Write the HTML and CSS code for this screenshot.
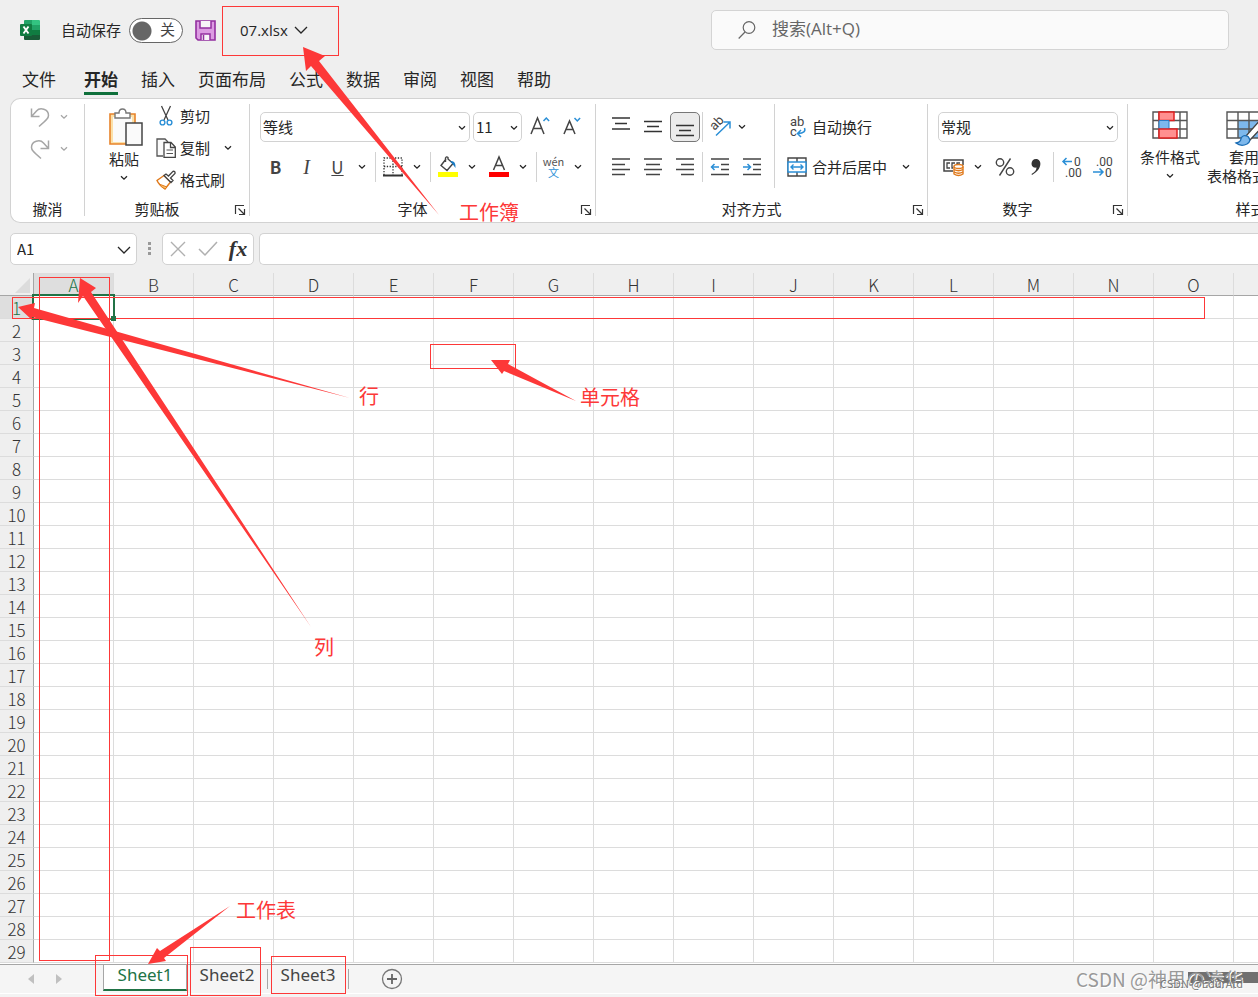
FILE: index.html
```html
<!DOCTYPE html>
<html lang="zh-CN">
<head>
<meta charset="utf-8">
<meta name="viewport" content="width=device-width, initial-scale=1">
<title>07.xlsx</title>
<link rel="stylesheet" href="styles.css">
</head>
<body>
<svg class="defs" aria-hidden="true">
  <symbol id="chev" viewBox="0 0 8 6"><path d="M1 1.2 4 4.2 7 1.2" fill="none" stroke="currentColor" stroke-width="1.3"/></symbol>
  <symbol id="chev-lg" viewBox="0 0 14 8"><path d="M1 1 7 7 13 1" fill="none" stroke="currentColor" stroke-width="1.3"/></symbol>
  <symbol id="launch" viewBox="0 0 12 12"><path d="M1.5 10V1.5H10M4.500 4.500 10 10M10.500 5V10.500H5" fill="none" stroke="#333" stroke-width="1.2"/></symbol>
</svg>
<div class="app">
  <header class="titlebar">
    <svg class="logo" viewBox="0 0 20 20"><path d="M4 1q0-1 1-1H12V10H4z" fill="#21a366"/><path d="M12 0H19q1 0 1 1V5H12z" fill="#33c481"/><path d="M12 5H20V10H12z" fill="#21a366"/><path d="M4 10H12V15H4z" fill="#185c37"/><path d="M12 10H20V15H12z" fill="#107c41"/><path d="M4 15H20V19q0 1-1 1H5q-1 0-1-1z" fill="#185c37"/><rect y="4" width="12" height="12" rx="1" fill="#107c41"/><path d="m3.500 6.500 5 7M8.500 6.500l-5 7" stroke="#fff" stroke-width="1.900"/></svg>
    <label class="autosave" for="autosave">自动保存</label>
    <span class="switch"><input type="checkbox" id="autosave" role="switch"><span class="switch-text">关</span></span>
    <button class="plain save" aria-label="保存"><svg width="21" height="21" viewBox="0 0 21 21"><path d="M1 1H20V20H3L1 18z" fill="#dc9be2" stroke="#932fa0" stroke-width="1.600"/><path d="M5 1V8H16V1M6 20V14H15V20" fill="#f8f4f8" stroke="#932fa0" stroke-width="1.500"/><path d="M8.500 15V20" stroke="#932fa0" stroke-width="1.500"/></svg></button>
    <button class="plain filename">07.xlsx <svg width="14" height="8"><use href="#chev-lg"/></svg></button>
    <div class="search">
      <svg width="18" height="18" viewBox="0 0 18 18"><circle cx="11" cy="6.500" r="5.800" fill="none" stroke="#666" stroke-width="1.200"/><path d="M7 11 .7 17.500" stroke="#666" stroke-width="1.200"/></svg>
      <input type="search" aria-label="搜索" placeholder="搜索(Alt+Q)">
    </div>
  </header>

  <nav class="menu">
    <button>文件</button><button class="active">开始</button><button>插入</button><button>页面布局</button><button>公式</button><button>数据</button><button>审阅</button><button>视图</button><button>帮助</button>
  </nav>

  <section class="ribbon">
    <div class="group undo">
      <div class="body stack">
        <button class="tool faded" aria-label="撤消"><svg width="20" height="20" viewBox="0 0 20 20"><path d="M1.500 1.500V9.500H9.500M1.500 9.500 6.500 4C10 0 18.500 2 18.500 8.500 18.500 11 17 12.500 9 19.500" fill="none" stroke="#a6a6a6" stroke-width="1.500"/></svg><svg class="ch"><use href="#chev"/></svg></button>
        <button class="tool faded" aria-label="重做"><svg width="20" height="20" viewBox="0 0 20 20"><path d="M18.500 1.500V9.500H10.500M18.500 9.500 13.500 4C10 0 1.500 2 1.500 8.500 1.500 11 3 12.500 11 19.500" fill="none" stroke="#a6a6a6" stroke-width="1.500"/></svg><svg class="ch"><use href="#chev"/></svg></button>
      </div>
      <div class="caption">撤消</div>
    </div>

    <div class="group clipboard">
      <div class="body cols">
        <button class="big">
          <svg width="36" height="40" viewBox="0 0 36 40"><path d="M2 6H27V36H2z" fill="#fbe0a8" stroke="#e8832a" stroke-width="1.600"/><path d="M5 9H24V34H5z" fill="#fafafa"/><path d="M7 10V5H11Q11 1 14.500 1T18 5H22V10z" fill="#fff" stroke="#777" stroke-width="1.400"/><path d="M18 15H34V37H18z" fill="#fafafa" stroke="#444" stroke-width="1.500"/></svg>
          <span>粘贴</span><svg class="ch"><use href="#chev"/></svg>
        </button>
        <div class="stack">
          <button class="tool"><svg width="20" height="20" viewBox="0 0 20 20"><path d="M5.500 0 12 14M14.500 0 8 14" stroke="#444" stroke-width="1.300"/><circle cx="6.500" cy="16.500" r="2.400" fill="none" stroke="#2b8fd6" stroke-width="1.400"/><circle cx="13.500" cy="16.500" r="2.400" fill="none" stroke="#2b8fd6" stroke-width="1.400"/></svg>剪切</button>
          <button class="tool"><svg width="20" height="20" viewBox="0 0 20 20"><path d="M7 18H1V1H9L12 4" fill="#fafafa" stroke="#555" stroke-width="1.300"/><path d="M8 4.500H15L19.300 9V19.300H8zM14.500 4.500V9.500H19" fill="#fff" stroke="#444" stroke-width="1.300"/><path d="M10.500 12H17M10.500 15.500H17" stroke="#555" stroke-width="1.200"/></svg>复制<svg class="ch far"><use href="#chev"/></svg></button>
          <button class="tool"><svg width="20" height="20" viewBox="0 0 20 20"><path d="M8 5.500 1 10.500Q3 15 9 19L14.500 12z" fill="#fff" stroke="#e07a1c" stroke-width="1.400"/><path d="M3 14 11 17 9 19Q5 17 3 14z" fill="#f8c068" stroke="#e07a1c"/><path d="M8 5.500 10 4 12.500 6 17 1.300Q19.500 1 19 3.500L14.500 8 17 10.500 15 12.500z" fill="#fff" stroke="#444" stroke-width="1.300"/></svg>格式刷</button>
        </div>
      </div>
      <div class="caption">剪贴板</div><button class="launcher" aria-label="剪贴板设置"><svg width="12" height="12"><use href="#launch"/></svg></button>
    </div>

    <div class="group font">
      <div class="body rows">
        <div class="row">
          <span class="combo wide"><select aria-label="字体"><option>等线</option></select><svg class="ch"><use href="#chev"/></svg></span>
          <span class="combo size"><select aria-label="字号"><option>11</option></select><svg class="ch"><use href="#chev"/></svg></span>
          <button class="ic" aria-label="增大字号"><svg width="22" height="22" viewBox="0 0 22 22"><path d="M2 18 8.500 2 15 18M4.200 12.500H12.800" fill="none" stroke="#444" stroke-width="1.500"/><path d="m14.500 5 2.800-3 2.800 3" fill="none" stroke="#2b8fd6" stroke-width="1.500"/></svg></button>
          <button class="ic" aria-label="减小字号"><svg width="22" height="22" viewBox="0 0 22 22"><path d="M3 18 8.500 5 14 18M5 13.500H12" fill="none" stroke="#444" stroke-width="1.500"/><path d="m13.500 2 2.800 3 2.800-3" fill="none" stroke="#2b8fd6" stroke-width="1.500"/></svg></button>
        </div>
        <div class="row tight">
          <button class="ic"><b>B</b></button><button class="ic"><i>I</i></button><button class="ic"><u>U</u></button><button class="drop" aria-label="下划线样式"><svg class="ch"><use href="#chev"/></svg></button>
          <span class="sep"></span>
          <button class="ic" aria-label="边框"><svg width="20" height="20" viewBox="0 0 20 20"><path d="M1 18V1H19V18M10 1V18M1 9.500H19" fill="none" stroke="#333" stroke-width="1.300" stroke-dasharray="1.300 1.500"/><path d="M0 18.500H20" stroke="#333" stroke-width="1.800"/></svg></button><button class="drop" aria-label="边框样式"><svg class="ch"><use href="#chev"/></svg></button>
          <span class="sep"></span>
          <button class="ic" aria-label="填充颜色"><svg width="20" height="22" viewBox="0 0 20 22"><path d="M8 3 3 9.500 9 14.500 15 7.500 10 3V1.500Q8.500 0 7.500 2V6" fill="#fff" stroke="#444" stroke-width="1.400"/><path d="M12 5Q18 4 17.500 12L14.500 8z" fill="#1b7cc4"/><path d="M0 16H20V21H0z" fill="#ff0"/></svg></button><button class="drop" aria-label="更多填充颜色"><svg class="ch"><use href="#chev"/></svg></button>
          <button class="ic spaced" aria-label="字体颜色"><svg width="20" height="22" viewBox="0 0 20 22"><path d="M4.500 14 10 1 15.500 14M6.500 9.500H13.500" fill="none" stroke="#444" stroke-width="1.500"/><path d="M0 16H20V21H0z" fill="red"/></svg></button><button class="drop" aria-label="更多字体颜色"><svg class="ch"><use href="#chev"/></svg></button>
          <span class="sep"></span>
          <button class="ic phonetic"><span>wén</span><em>文</em></button><button class="drop" aria-label="拼音选项"><svg class="ch"><use href="#chev"/></svg></button>
        </div>
      </div>
      <div class="caption">字体</div><button class="launcher" aria-label="字体设置"><svg width="12" height="12"><use href="#launch"/></svg></button>
    </div>

    <div class="group align">
      <div class="body cols">
        <div class="rows alignments">
          <div class="row">
            <button class="ic" aria-label="顶端对齐"><svg width="20" height="20" viewBox="0 0 20 20"><path d="M1 1H19M4 6.500H16M1 12H19" stroke="#333" stroke-width="1.400"/></svg></button>
            <button class="ic" aria-label="垂直居中"><svg width="20" height="20" viewBox="0 0 20 20"><path d="M1 4.500H19M4 9.500H16M1 14.500H19" stroke="#333" stroke-width="1.400"/></svg></button>
            <button class="ic on" aria-label="底端对齐"><svg width="20" height="20" viewBox="0 0 20 20"><path d="M1 8.500H19M4 13.500H16M1 18.500H19" stroke="#333" stroke-width="1.400"/></svg></button>
            <span class="sep"></span>
            <button class="ic" aria-label="方向"><svg width="22" height="22" viewBox="0 0 22 22"><text class="glyph" x="1" y="12" transform="rotate(-45 7 8)">ab</text><path d="M7 19.500 20.500 6.500M14.500 6H21V12.500" fill="none" stroke="#2b8fd6" stroke-width="1.500"/></svg></button><button class="drop" aria-label="方向选项"><svg class="ch"><use href="#chev"/></svg></button>
          </div>
          <div class="row">
            <button class="ic" aria-label="左对齐"><svg width="20" height="20" viewBox="0 0 20 20"><path d="M1 2H19M1 7.500H14M1 12.500H19M1 17.500H14" stroke="#444" stroke-width="1.400"/></svg></button>
            <button class="ic" aria-label="居中"><svg width="20" height="20" viewBox="0 0 20 20"><path d="M1 2H19M3 7.500H17M1 12.500H19M3 17.500H17" stroke="#444" stroke-width="1.400"/></svg></button>
            <button class="ic" aria-label="右对齐"><svg width="20" height="20" viewBox="0 0 20 20"><path d="M1 2H19M6 7.500H19M1 12.500H19M6 17.500H19" stroke="#444" stroke-width="1.400"/></svg></button>
            <span class="sep"></span>
            <button class="ic" aria-label="减少缩进"><svg width="20" height="20" viewBox="0 0 20 20"><path d="M1 2H19M11 7.500H19M11 12.500H19M1 17.500H19" stroke="#444" stroke-width="1.400"/><path d="M9 10H1.500M4.500 7 1.500 10 4.500 13" fill="none" stroke="#2b8fd6" stroke-width="1.500"/></svg></button>
            <button class="ic" aria-label="增加缩进"><svg width="20" height="20" viewBox="0 0 20 20"><path d="M1 2H19M11 7.500H19M11 12.500H19M1 17.500H19" stroke="#444" stroke-width="1.400"/><path d="M1 10H8.500M5.500 7 8.500 10 5.500 13" fill="none" stroke="#2b8fd6" stroke-width="1.500"/></svg></button>
          </div>
        </div>
        <div class="rows merges">
          <div class="row"><button class="tool"><svg width="20" height="24" viewBox="0 0 20 24"><text class="glyph" x="3" y="11">ab</text><text class="glyph" x="3" y="21">c</text><path d="M17.500 13Q19.500 18 11 18.500M14 15 10.500 18.500 14 22" fill="none" stroke="#2b8fd6" stroke-width="1.500"/></svg>自动换行</button></div>
          <div class="row"><button class="tool"><svg width="20" height="20" viewBox="0 0 20 20"><path d="M1 1H19V19H1zM10 1V5M10 15V19" fill="#fff" stroke="#444" stroke-width="1.400"/><path d="M1 5H19V15H1z" fill="#fff" stroke="#2b8fd6" stroke-width="1.500"/><path d="M4 10H16M6.500 7.500 4 10 6.500 12.500M13.500 7.500 16 10 13.500 12.500" fill="none" stroke="#2b8fd6" stroke-width="1.400"/></svg>合并后居中<svg class="ch far"><use href="#chev"/></svg></button></div>
        </div>
      </div>
      <div class="caption">对齐方式</div><button class="launcher" aria-label="对齐设置"><svg width="12" height="12"><use href="#launch"/></svg></button>
    </div>

    <div class="group number">
      <div class="body rows">
        <div class="row"><span class="combo format"><select aria-label="数字格式"><option>常规</option></select><svg class="ch"><use href="#chev"/></svg></span></div>
        <div class="row tight">
          <button class="ic" aria-label="会计数字格式"><svg width="22" height="20" viewBox="0 0 22 20"><path d="M10 14H1V3H20V8" fill="none" stroke="#444" stroke-width="1.500"/><path d="M7 6H4V11H7M12 6H9V11H10M14 8V6H17" fill="none" stroke="#444" stroke-width="1.300"/><path d="M11 9.500V17Q15.500 20 20 17V9.500" fill="#fff" stroke="#e07a1c" stroke-width="1.400"/><ellipse cx="15.500" cy="9.500" rx="4.500" ry="2" fill="#fff" stroke="#e07a1c" stroke-width="1.400"/><path d="M11 12.500Q15.500 15 20 12.500M11 15Q15.500 17.500 20 15" fill="none" stroke="#e07a1c" stroke-width="1.400"/></svg></button><button class="drop" aria-label="货币选项"><svg class="ch"><use href="#chev"/></svg></button>
          <button class="ic spaced" aria-label="百分比"><svg width="20" height="20" viewBox="0 0 20 20"><circle cx="5" cy="5.500" r="3.700" fill="none" stroke="#444" stroke-width="1.400"/><circle cx="15" cy="14.500" r="3.700" fill="none" stroke="#444" stroke-width="1.400"/><path d="M15.500 1.500 4.500 18.500" stroke="#444" stroke-width="1.400"/></svg></button>
          <button class="ic" aria-label="千位分隔"><svg width="12" height="18" viewBox="0 0 12 18"><path d="M6 1C12 1 13 11 2 17L1.500 16C5 14 6.500 12 6.500 9.500 0 11 0 1 6 1z" fill="#333"/></svg></button>
          <span class="sep"></span>
          <button class="ic" aria-label="增加小数位"><svg width="22" height="24" viewBox="0 0 22 24"><text class="digits" x="13" y="11">0</text><text class="digits" x="4" y="22">.00</text><path d="M11 6.500H2M5.500 3 2 6.500 5.500 10" fill="none" stroke="#2b8fd6" stroke-width="1.500"/></svg></button>
          <button class="ic" aria-label="减少小数位"><svg width="22" height="24" viewBox="0 0 22 24"><text class="digits" x="4" y="11">.00</text><text class="digits" x="13" y="22">0</text><path d="M1 17H11M7.500 13.500 11 17 7.500 20.500" fill="none" stroke="#2b8fd6" stroke-width="1.500"/></svg></button>
        </div>
      </div>
      <div class="caption">数字</div><button class="launcher" aria-label="数字设置"><svg width="12" height="12"><use href="#launch"/></svg></button>
    </div>

    <div class="group styles">
      <div class="body cols">
        <button class="big">
          <svg width="36" height="28" viewBox="0 0 36 28"><path d="M1 1H35V27H1zM1 9.500H35M1 18H35M7 1V27M28 1V27" fill="#fff" stroke="#555" stroke-width="1.400"/><path d="M7 1H22V9.500H7z" fill="#ff9090" stroke="#e02020" stroke-width="1.500"/><path d="M7 9.500H17V18H7z" fill="#7db8ec" stroke="#2b7cc4"/><path d="M7 18H25V27H7z" fill="#ff9090" stroke="#e02020" stroke-width="1.500"/></svg>
          <span>条件格式</span><svg class="ch"><use href="#chev"/></svg>
        </button>
        <button class="big table-style">
          <svg width="36" height="36" viewBox="0 0 36 36"><path d="M1 1H35V27H1z" fill="#fff"/><path d="M12 9.500H35V27H12z" fill="#7db8ec"/><path d="M1 1H35V27H1zM1 9.500H35M1 18H35M12 1V27M23 1V27" fill="none" stroke="#555" stroke-width="1.400"/><path d="M35 8 20 25 24 29 38 14z" fill="#fff" stroke="#444" stroke-width="1.300"/><path d="M10 32Q15 31 15 27.500 17 23 22 25.500 26 30 21 33 15 36 10 32z" fill="#7db8ec" stroke="#1b6db5" stroke-width="1.300"/></svg>
          <span>套用</span><span>表格格式 <svg class="ch"><use href="#chev"/></svg></span>
        </button>
      </div>
      <div class="caption">样式</div>
    </div>
  </section>

  <div class="formula-bar">
    <span class="combo namebox"><input type="text" aria-label="名称框" value="A1"><svg width="14" height="8"><use href="#chev-lg"/></svg></span>
    <svg class="grip" width="4" height="14"><path d="M0 0H3V3H0zM0 5H3V8H0zM0 10H3V13H0z" fill="#999"/></svg>
    <div class="fx">
      <button aria-label="取消"><svg width="16" height="16"><path d="M1 1 15 15M15 1 1 15" stroke="#b0b0b0" stroke-width="1.400"/></svg></button>
      <button aria-label="输入"><svg width="20" height="16"><path d="M1 8 7 14 19 1" fill="none" stroke="#b0b0b0" stroke-width="1.500"/></svg></button>
      <button class="fn" aria-label="插入函数">fx</button>
    </div>
    <input class="formula" type="text" aria-label="编辑栏">
  </div>

  <main class="sheet">
    <table>
      <thead><tr><th class="corner"><svg width="15" height="15"><path d="M15 0V15H0z" fill="#dcdcdc"/></svg><th class="sel">A<th>B<th>C<th>D<th>E<th>F<th>G<th>H<th>I<th>J<th>K<th>L<th>M<th>N<th>O<th></tr></thead>
      <tbody>
        <tr><th class="sel">1<td class="cursor"><td><td><td><td><td><td><td><td><td><td><td><td><td><td><td>
        <tr><th>2<td><td><td><td><td><td><td><td><td><td><td><td><td><td><td><td>
        <tr><th>3<td><td><td><td><td><td><td><td><td><td><td><td><td><td><td><td>
        <tr><th>4<td><td><td><td><td><td><td><td><td><td><td><td><td><td><td><td>
        <tr><th>5<td><td><td><td><td><td><td><td><td><td><td><td><td><td><td><td>
        <tr><th>6<td><td><td><td><td><td><td><td><td><td><td><td><td><td><td><td>
        <tr><th>7<td><td><td><td><td><td><td><td><td><td><td><td><td><td><td><td>
        <tr><th>8<td><td><td><td><td><td><td><td><td><td><td><td><td><td><td><td>
        <tr><th>9<td><td><td><td><td><td><td><td><td><td><td><td><td><td><td><td>
        <tr><th>10<td><td><td><td><td><td><td><td><td><td><td><td><td><td><td><td>
        <tr><th>11<td><td><td><td><td><td><td><td><td><td><td><td><td><td><td><td>
        <tr><th>12<td><td><td><td><td><td><td><td><td><td><td><td><td><td><td><td>
        <tr><th>13<td><td><td><td><td><td><td><td><td><td><td><td><td><td><td><td>
        <tr><th>14<td><td><td><td><td><td><td><td><td><td><td><td><td><td><td><td>
        <tr><th>15<td><td><td><td><td><td><td><td><td><td><td><td><td><td><td><td>
        <tr><th>16<td><td><td><td><td><td><td><td><td><td><td><td><td><td><td><td>
        <tr><th>17<td><td><td><td><td><td><td><td><td><td><td><td><td><td><td><td>
        <tr><th>18<td><td><td><td><td><td><td><td><td><td><td><td><td><td><td><td>
        <tr><th>19<td><td><td><td><td><td><td><td><td><td><td><td><td><td><td><td>
        <tr><th>20<td><td><td><td><td><td><td><td><td><td><td><td><td><td><td><td>
        <tr><th>21<td><td><td><td><td><td><td><td><td><td><td><td><td><td><td><td>
        <tr><th>22<td><td><td><td><td><td><td><td><td><td><td><td><td><td><td><td>
        <tr><th>23<td><td><td><td><td><td><td><td><td><td><td><td><td><td><td><td>
        <tr><th>24<td><td><td><td><td><td><td><td><td><td><td><td><td><td><td><td>
        <tr><th>25<td><td><td><td><td><td><td><td><td><td><td><td><td><td><td><td>
        <tr><th>26<td><td><td><td><td><td><td><td><td><td><td><td><td><td><td><td>
        <tr><th>27<td><td><td><td><td><td><td><td><td><td><td><td><td><td><td><td>
        <tr><th>28<td><td><td><td><td><td><td><td><td><td><td><td><td><td><td><td>
        <tr><th>29<td><td><td><td><td><td><td><td><td><td><td><td><td><td><td><td>
      </tbody>
    </table>
  </main>

  <footer class="tabs">
    <button class="arrow" aria-label="上一个"><svg width="6" height="10"><path d="M6 0V10L0 5z" fill="#c0c0c0"/></svg></button>
    <button class="arrow" aria-label="下一个"><svg width="6" height="10"><path d="M0 0V10L6 5z" fill="#c0c0c0"/></svg></button>
    <button class="tab current">Sheet1</button>
    <button class="tab">Sheet2</button><span class="divider"></span>
    <button class="tab">Sheet3</button><span class="divider"></span>
    <button class="add" aria-label="新工作表"><svg width="22" height="22"><circle cx="11" cy="11" r="9.500" fill="none" stroke="#777" stroke-width="1.300"/><path d="M11 6V16M6 11H16" stroke="#666" stroke-width="1.800"/></svg></button>
    <span class="scroll"></span>
  </footer>

  <svg class="notes">
    <g class="frames">
      <rect x="222.500" y="6.500" width="116" height="49"/>
      <rect x="39.500" y="277.500" width="70" height="683"/>
      <rect x="12.500" y="297.500" width="1192" height="21"/>
      <rect x="430.500" y="344.500" width="85" height="24"/>
      <rect x="95.500" y="955.500" width="92" height="40"/>
      <rect x="190.500" y="947.500" width="70" height="48"/>
      <rect x="271.500" y="956.500" width="74" height="37"/>
    </g>
    <g class="arrows">
      <path d="M303 47 325 56 319 61 439 215 311 66 306 71z"/>
      <path d="M80 278 96 288 91 292 311 627 83 296 78 303z"/>
      <path d="M18 307 35 303 34 308 350 398 32 317 32 320z"/>
      <path d="M491 360 510 360 508 364 576 401 504 371 502 374z"/>
      <path d="M148 964 157 948 160 951 230 906 164 958 166 961z"/>
    </g>
    <text x="459" y="220">工作簿</text>
    <text x="359" y="404">行</text>
    <text x="580" y="405">单元格</text>
    <text x="314" y="655">列</text>
    <text x="236" y="918">工作表</text>
  </svg>
  <div class="watermark"><span>CSDN @神里の凌华</span><small>CSDN @EdurAtd</small></div>
</div>
</body>
</html>
```
FILE: styles.css
```css
* { box-sizing: border-box; }
body {
  margin: 0;
  overflow: hidden;
  background: #efefef;
  color: #262626;
  font: 15px/20px "Noto Sans CJK SC", "Noto Sans", sans-serif;
}
button, input, select { font: inherit; color: inherit; }
button { margin: 0; padding: 0; border: 0; background: none; }
svg { display: block; flex: none; overflow: visible; }
.defs { position: absolute; width: 0; height: 0; }
.ch { width: 8px; height: 6px; }
.app { position: relative; display: flex; flex-direction: column; min-height: 100vh; overflow: hidden; }

.titlebar { display: flex; align-items: center; height: 60px; padding: 0 29px 0 20px; }
.logo { width: 20px; height: 20px; margin-right: 21px; }
.autosave { margin-right: 8px; }
.switch { position: relative; display: flex; width: 54px; height: 25px; }
.switch input { appearance: none; width: 54px; height: 25px; margin: 0; border: 1px solid #666; border-radius: 13px; background: radial-gradient(circle at 12px 12px, #666 9px, #fff 10px); }
.switch-text { position: absolute; right: 8px; top: 1px; color: #444; }
.save { margin: 0 24px 0 12px; }
.filename { display: flex; align-items: center; gap: 6px; font-family: "Open Sans", "Noto Sans CJK SC", sans-serif; }
.search { display: flex; align-items: center; gap: 16px; width: 518px; height: 40px; margin-left: auto; padding-left: 26px; border: 1px solid #d4d4d4; border-radius: 5px; background: #fafafa; }
.search input { flex: 1; min-width: 0; padding: 0 0 2px; border: 0; outline: 0; background: none; font: 17px/24px "Open Sans", "Noto Sans CJK SC", sans-serif; }
.search input::placeholder { color: #666; opacity: 1; }

.menu { display: flex; gap: 23px; height: 38px; padding: 6px 22px 0; font-size: 17px; }
.menu button { height: 29px; padding-bottom: 1px; border-bottom: 3px solid transparent; }
.menu .active { margin-left: 5px; border-color: #0f703b; font-weight: bold; }

.ribbon { display: flex; height: 125px; margin-left: 10px; border: 1px solid #d2d2d2; border-right: 0; border-radius: 10px 0 0 10px; background: #fff; overflow: hidden; }
.group { position: relative; flex: none; display: flex; flex-direction: column; height: 112px; margin-top: 5px; border-right: 1px solid #d2d2d2; }
.body { flex: 1; min-height: 0; }
.caption { line-height: 14px; padding-right: 20px; text-align: center; white-space: nowrap; }
.launcher { position: absolute; right: 3px; bottom: 0; }
.stack { display: flex; flex-direction: column; gap: 8px; }
.cols { display: flex; }
.rows { display: flex; flex-direction: column; gap: 10px; padding-top: 8px; }
.row { display: flex; align-items: center; height: 30px; }
.tool { display: flex; align-items: center; gap: 5px; height: 24px; white-space: nowrap; }
.faded { gap: 10px; color: #a6a6a6; }
.far { margin-left: 10px; }
.ic { display: flex; align-items: center; justify-content: center; width: 32px; height: 30px; flex: none; }
.drop { display: flex; align-items: center; justify-content: center; width: 17px; height: 30px; }
.sep { width: 1px; height: 30px; margin: 0 3px; background: #d2d2d2; }
.tight .ic { width: 31px; }
.tight .spaced { margin-left: 3px; }
.big { display: flex; flex-direction: column; align-items: center; white-space: nowrap; }
.big .ch { margin-top: 6px; }
.combo { position: relative; display: flex; height: 30px; border: 1px solid #d2d2d2; border-radius: 5px; background: #fff; }
.combo select, .combo input { appearance: none; width: 100%; padding: 0 2px; border: 0; outline: 0; background: none; }
.combo svg { position: absolute; right: 3px; top: 12px; pointer-events: none; }
.glyph, .digits { font: 12px Roboto, sans-serif; fill: #444; }
.glyph { font-size: 13px; }

.undo { width: 74px; }
.undo .body { padding: 1px 0 0 19px; }
.undo .caption { padding-right: 0; }
.clipboard { width: 165px; }
.clipboard .cols { gap: 12px; padding-left: 19px; }
.clipboard .big { padding-top: 4px; }
.clipboard .big > svg:first-child { margin-left: 4px; }
.clipboard .big span { margin-top: 1px; }
.clipboard .tool { gap: 4px; }
.font { width: 346px; }
.font .body { padding-left: 10px; }
.wide { width: 210px; margin-right: 3px; }
.size { width: 49px; margin-right: 2px; }
.font b, .font i, .font u { font-size: 17px; color: #444; }
.font i { font-family: "Liberation Serif", serif; font-size: 20px; }
.font .sep { margin: 0 1px 0 5px; }
.phonetic { flex-direction: column; font-size: 11px; line-height: 11px; color: #555; }
.phonetic em { font-style: normal; color: #2b8fd6; }
.align { width: 332px; }
.alignments { width: 179px; padding-left: 9px; margin-bottom: 14px; border-right: 1px solid #d2d2d2; }
.alignments .sep { margin: 0 1px; }
.alignments .drop { width: 12px; }
.on { width: 30px; margin: 0 1px; border: 1px solid #777; border-radius: 5px; background: #ebebeb; }
.merges { padding-left: 12px; }
.number { width: 200px; }
.number .body { padding-left: 10px; }
.format { width: 180px; }
.number .sep { margin: 0 2px; }
.styles { width: 246px; }
.styles .cols { gap: 7px; padding: 7px 0 0 12px; }
.styles .big span { margin-top: 8px; }
.styles .table-style span { margin-top: 0; }
.table-style > span { display: flex; gap: 6px; line-height: 19px; }
.styles .caption { padding-right: 0; }

.formula-bar { display: flex; align-items: center; height: 50px; padding: 2px 0 0 10px; }
.namebox { width: 127px; height: 32px; }
.namebox input { padding: 0 6px; }
.namebox svg { right: 5px; }
.grip { margin: 0 10px 0 11px; }
.fx { display: flex; align-items: center; width: 92px; height: 32px; margin-right: 5px; border: 1px solid #d2d2d2; border-radius: 5px; background: #fff; }
.fx button { display: flex; flex: 1; justify-content: center; }
.fx .fn { font: italic bold 22px/24px "Liberation Serif", serif; color: #333; }
.formula { flex: 1; height: 32px; border: 1px solid #d2d2d2; border-right: 0; border-radius: 5px 0 0 5px; background: #fff; outline: 0; }

.sheet { flex: 1; overflow: hidden; background: #fff; }
.sheet table { width: 1314px; table-layout: fixed; border-collapse: separate; border-spacing: 0; }
.sheet th, .sheet td { height: 23px; padding: 0; border: solid #dcdcdc; border-width: 0 1px 1px 0; }
.sheet th { width: 80px; padding-top: 2px; background: #efefef; color: #333; font-size: 17px; font-weight: 300; line-height: 20px; }
.sheet thead th { border-bottom-color: #a6a6a6; }
.sheet tbody th { border-right-color: #a6a6a6; }
.sheet .corner { width: 34px; border-right-color: #a6a6a6; }
.corner svg { margin-left: 15px; }
.sheet th.sel { background: #dedede; color: #217346; }
.sheet .cursor { position: relative; }
.cursor::after { content: ""; position: absolute; inset: -2px; border: 2px solid #217346; }
.cursor::before { content: ""; position: absolute; right: -3px; bottom: -3px; width: 5px; height: 5px; background: #217346; z-index: 1; }

.tabs { position: relative; display: flex; align-items: flex-start; height: 33px; border-top: 1px solid #a6a6a6; background: linear-gradient(#f5f5f5 28px, #fff 28px, #fff 29px, #f3f3f3 29px); }
.arrow { display: flex; width: 28px; height: 28px; align-items: center; justify-content: center; }
.arrow:first-child { margin-left: 17px; }
.tab { width: 80px; height: 26px; padding-bottom: 6px; font: 17px/20px "Noto Sans", sans-serif; color: #444; }
.tab.current { width: 84px; margin-left: 30px; padding-bottom: 4px; border: solid #a6a6a6; border-width: 0 1px 2px; border-bottom-color: #217346; background: #fff; color: #217346; }
.divider { width: 1px; height: 20px; margin-top: 4px; background: #a6a6a6; }
.add { margin: 3px 0 0 32px; }
.scroll { position: absolute; right: 0; top: 7px; width: 70px; height: 11px; background: #707070; }

.notes { position: absolute; inset: 0; width: 100%; height: 100%; pointer-events: none; }
.frames rect { fill: none; stroke: #fd3838; stroke-width: 1; }
.arrows path { fill: #fd3838; }
.notes text { font: 20px "Noto Sans CJK SC", sans-serif; fill: #fd3838; }
.watermark { position: absolute; right: 15px; bottom: 4px; color: #999; font: 19px/28px "Noto Sans CJK SC", sans-serif; text-shadow: 1px 1px 0 #fff; white-space: nowrap; }
.watermark small { position: absolute; right: 0; top: 8px; font-size: 11px; line-height: 20px; color: #777; }
```
